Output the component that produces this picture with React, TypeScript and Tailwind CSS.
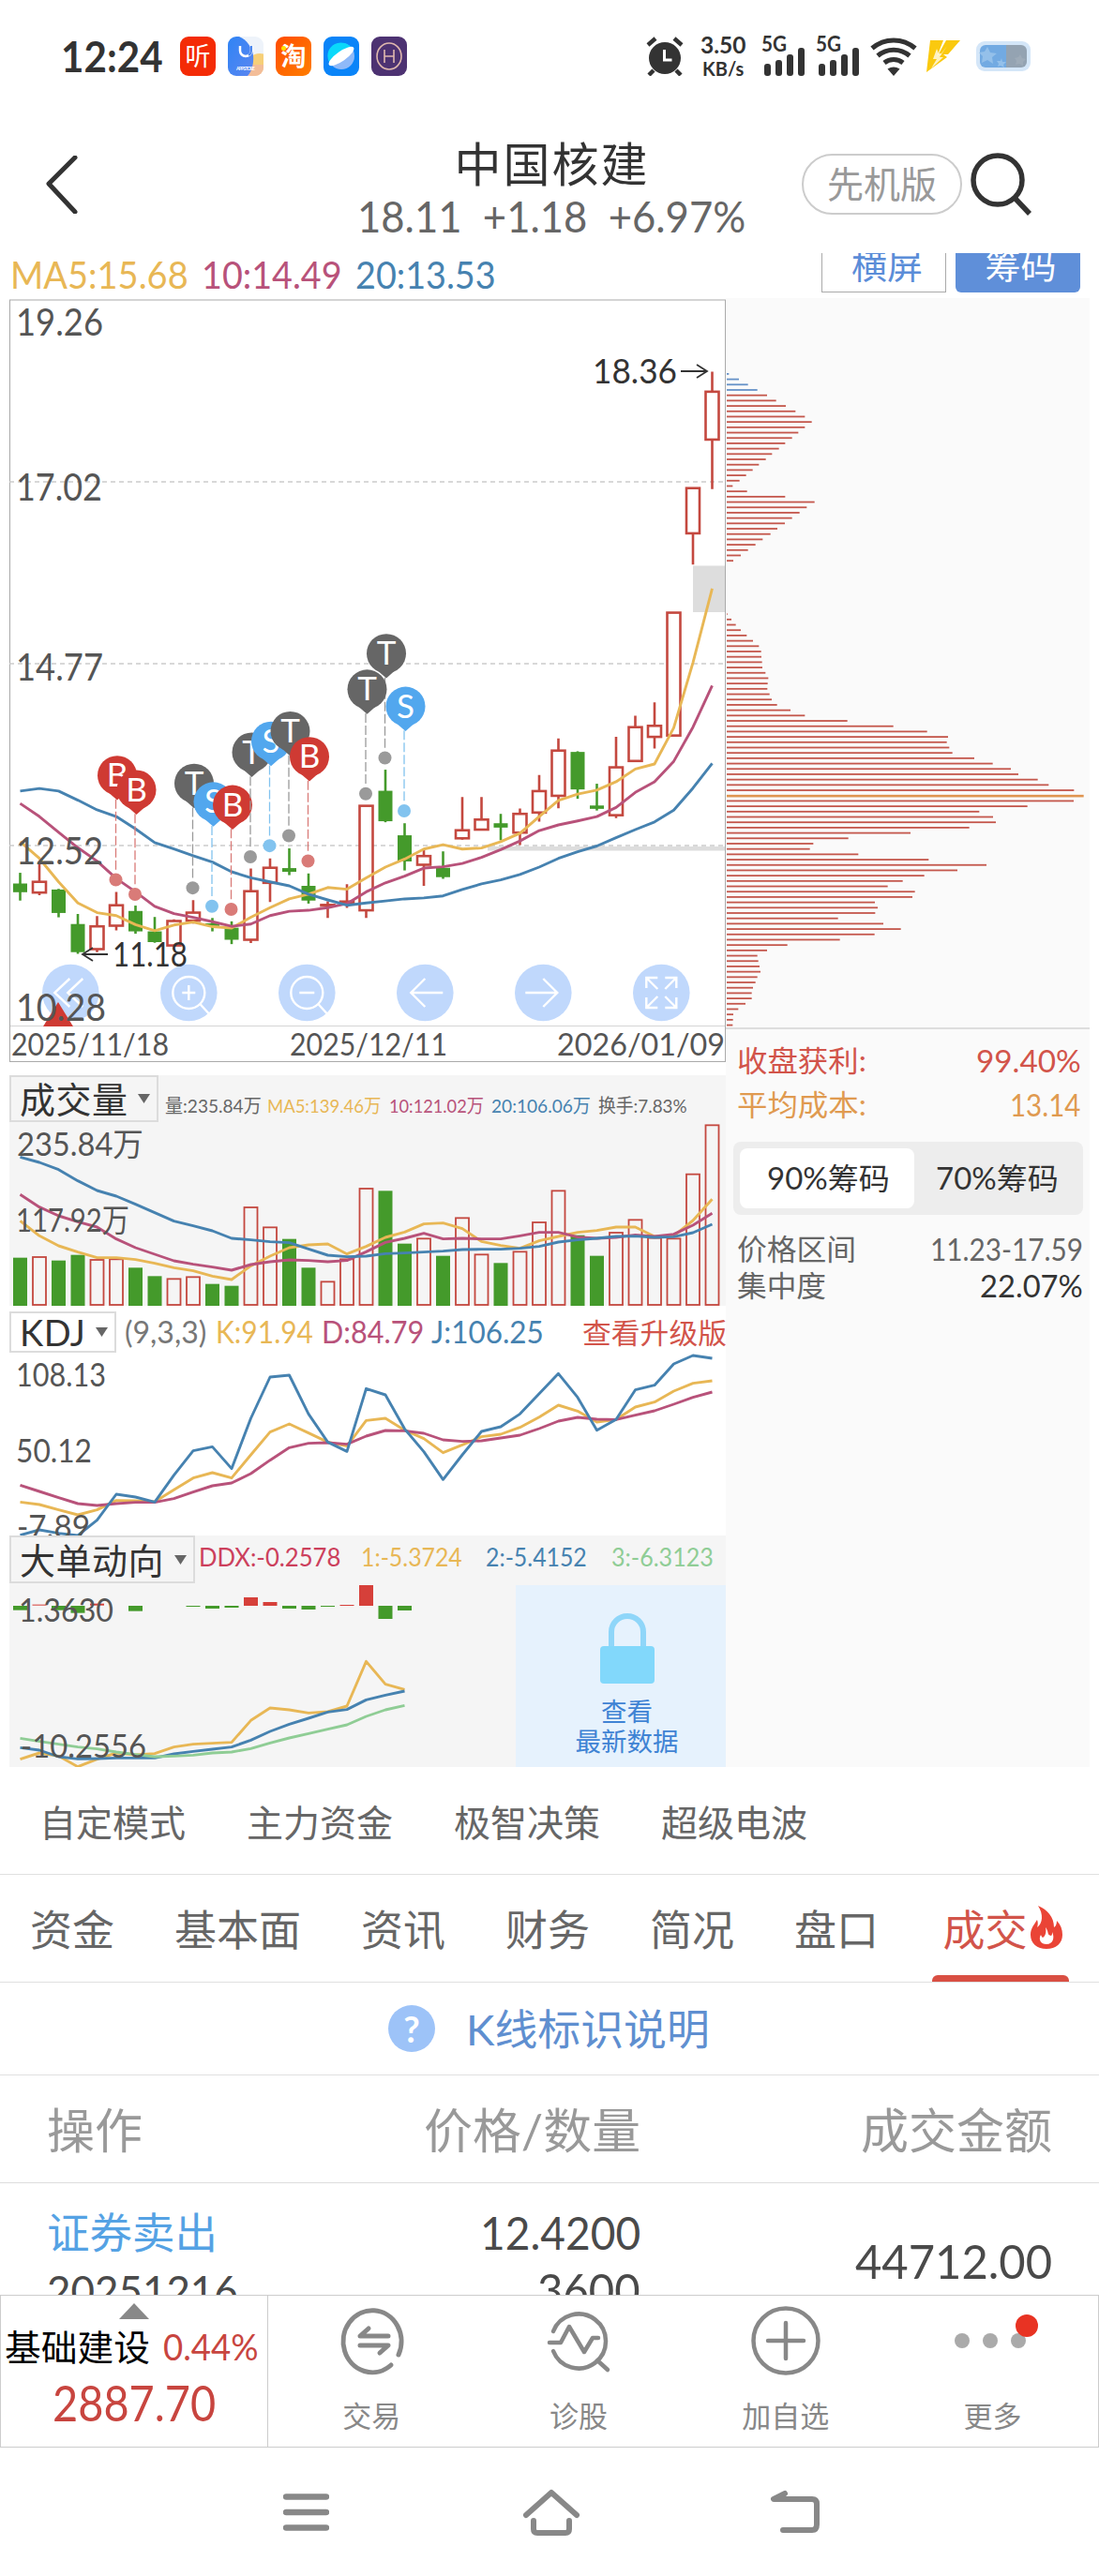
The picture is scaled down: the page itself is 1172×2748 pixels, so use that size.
import React, { useLayoutEffect, useRef, useState } from 'react';

const YELLOW = '#e8b755';
const PINK = '#b8527a';
const BLUE = '#4682b0';
const RED = '#c4483f';
const GREEN = '#449a2b';
const FONT = 'Lato, "Noto Sans CJK SC", sans-serif';

// [high, body top, body bottom, low, rising]
const candles: [number, number, number, number, number][] = [
  [983, 1015, 1041, 1066, 0], [955, 1010, 1042, 1050, 1], [1031, 1033, 1103, 1116, 0], [1106, 1136, 1220, 1225, 0],
  [1112, 1143, 1211, 1220, 1], [1040, 1080, 1141, 1155, 1], [1081, 1097, 1158, 1165, 0], [1115, 1158, 1190, 1192, 0],
  [1122, 1127, 1200, 1200, 1], [1065, 1102, 1126, 1135, 1], [1118, 1134, 1142, 1158, 0], [1128, 1147, 1183, 1196, 0],
  [970, 1038, 1183, 1193, 1], [940, 968, 1013, 1070, 1], [910, 969, 980, 990, 0], [985, 1022, 1066, 1075, 0],
  [1068, 1079, 1081, 1118, 1], [1017, 1069, 1072, 1088, 1], [782, 783, 1095, 1118, 1], [675, 738, 829, 832, 0],
  [835, 871, 949, 976, 0], [912, 933, 959, 1022, 1], [919, 968, 996, 1001, 0], [757, 856, 880, 884, 1],
  [757, 824, 854, 856, 1], [807, 835, 848, 886, 0], [791, 807, 863, 900, 1], [691, 739, 803, 830, 1],
  [582, 618, 753, 790, 1], [620, 622, 734, 762, 0], [717, 782, 792, 797, 0], [577, 668, 811, 820, 1],
  [514, 548, 649, 650, 1], [474, 544, 577, 612, 1], [205, 206, 573, 574, 1], [-168, -166, -31, 62, 1],
  [-514, -454, -311, -163, 1],
];
const ma5 = [890, 940, 1010, 1073, 1102, 1111, 1138, 1156, 1139, 1130, 1144, 1148, 1116, 1087, 1061, 1047, 1027, 1032, 998, 966, 942, 912, 899, 912, 909, 890, 865, 815, 767, 748, 736, 711, 673, 658, 550, 355, 134];
const ma10 = [776, 815, 862, 908, 948, 1000, 1040, 1083, 1105, 1116, 1129, 1143, 1136, 1111, 1098, 1095, 1087, 1075, 1040, 1013, 993, 969, 965, 955, 937, 914, 888, 857, 840, 828, 815, 788, 743, 711, 650, 548, 424];
const ma20 = [739, 731, 739, 766, 795, 815, 852, 893, 912, 932, 951, 980, 998, 1010, 1022, 1047, 1064, 1080, 1073, 1067, 1061, 1058, 1052, 1033, 1016, 1004, 988, 966, 940, 920, 903, 878, 854, 831, 796, 730, 656];

const marks: [number, string, string, string, number][] = [
  [5, 'B', '#cf3a33', '#d97b78', 692], [6, 'B', '#cf3a33', '#d97b78', 735],
  [9, 'T', '#666666', '#9a9a9a', 716], [10, 'S', '#52a7ee', '#82c3ef', 771], [11, 'B', '#cf3a33', '#d97b78', 780],
  [12, 'T', '#666666', '#9a9a9a', 623], [13, 'S', '#52a7ee', '#82c3ef', 590], [14, 'T', '#666666', '#9a9a9a', 560],
  [15, 'B', '#cf3a33', '#d97b78', 636], [19, 'T', '#666666', '#9a9a9a', 328], [18, 'T', '#666666', '#9a9a9a', 435],
  [20, 'S', '#52a7ee', '#82c3ef', 486],
];

const volume: [number, number][] = [
  [605, 0], [603, 1], [614, 0], [596, 0], [612, 1], [610, 1], [637, 0], [664, 0], [673, 1], [667, 1], [689, 0], [695, 0],
  [444, 1], [508, 1], [545, 0], [637, 0], [682, 1], [610, 1], [384, 1], [391, 0], [560, 0], [544, 1], [599, 0], [478, 1],
  [595, 1], [622, 0], [586, 1], [492, 1], [391, 1], [533, 0], [599, 0], [525, 1], [484, 1], [542, 1], [544, 1], [338, 1], [181, 1],
];
const vol5 = [487, 535, 567, 587, 605, 605, 611, 623, 637, 647, 664, 675, 631, 600, 573, 564, 561, 593, 569, 540, 523, 497, 494, 512, 553, 566, 575, 551, 537, 524, 518, 507, 507, 537, 535, 486, 418];
const vol10 = [403, 443, 471, 490, 507, 545, 573, 594, 615, 626, 635, 645, 627, 618, 612, 614, 618, 614, 586, 556, 543, 527, 545, 543, 545, 545, 535, 524, 524, 539, 543, 540, 532, 537, 530, 501, 463];
const vol20 = [283, 300, 323, 359, 390, 408, 434, 461, 488, 503, 519, 543, 548, 554, 557, 577, 597, 602, 600, 592, 590, 587, 584, 579, 578, 578, 575, 569, 555, 548, 543, 537, 536, 540, 538, 525, 498];

const kLine = [1387, 1395, 1412, 1428, 1412, 1382, 1383, 1386, 1348, 1310, 1293, 1310, 1236, 1163, 1137, 1166, 1195, 1208, 1126, 1119, 1157, 1184, 1229, 1204, 1178, 1170, 1148, 1115, 1077, 1096, 1131, 1123, 1083, 1067, 1032, 1007, 999];
const dLine = [1333, 1353, 1373, 1392, 1398, 1392, 1388, 1388, 1376, 1355, 1335, 1326, 1296, 1253, 1213, 1199, 1197, 1202, 1176, 1158, 1159, 1167, 1188, 1193, 1191, 1182, 1173, 1152, 1128, 1116, 1122, 1123, 1109, 1095, 1074, 1052, 1035];
const jLine = [1493, 1476, 1487, 1494, 1445, 1362, 1371, 1387, 1301, 1223, 1210, 1280, 1119, 987, 981, 1105, 1195, 1225, 1024, 1044, 1153, 1226, 1315, 1236, 1161, 1146, 1105, 1040, 976, 1052, 1157, 1123, 1028, 1013, 945, 918, 927];

// [index, top, bottom, rising]
const ddx: [number, number, number, number][] = [
  [0, 279, 293, 0], [1, 275, 278, 1], [2, 279, 293, 0], [3, 279, 302, 0], [4, 272, 278, 1], [6, 279, 296, 0], [9, 279, 282, 0],
  [10, 279, 288, 0], [11, 279, 285, 0], [12, 252, 279, 1], [13, 267, 279, 1], [14, 279, 288, 0], [15, 279, 291, 0],
  [16, 279, 282, 0], [17, 276, 279, 1], [18, 213, 279, 1], [19, 279, 321, 0], [20, 279, 294, 0],
];
const ddx1 = [770, 750, 760, 794, 770, 750, 756, 752, 731, 722, 719, 716, 646, 606, 612, 622, 618, 600, 457, 530, 547];
const ddx2 = [733, 741, 762, 769, 768, 766, 766, 766, 753, 745, 738, 731, 709, 681, 658, 639, 619, 611, 580, 565, 552];
const ddx3 = [703, 713, 722, 731, 737, 747, 755, 762, 760, 757, 750, 747, 736, 718, 702, 688, 674, 660, 633, 612, 598];

const chipsTop = [52, 84, 113, 143, 174, 203, 234, 265, 295, 317, 295, 274, 254, 232, 212, 190, 170, 148, 128, 107, 86, 64, 110, 232, 326, 301, 278, 254, 231, 207, 185, 160, 137, 113, 90, 66];
const chipsBottom = [47, 60, 74, 90, 109, 129, 148, 155, 156, 158, 159, 169, 178, 176, 175, 182, 189, 206, 249, 295, 431, 578, 686, 753, 749, 757, 767, 837, 896, 954, 978, 1040, 1075, 1156, 1187, 1155, 1007, 853, 897, 906, 821, 633, 434, 322, 311, 466, 691, 876, 783, 677, 608, 560, 647, 639, 519, 528, 520, 401, 546, 602, 518, 407, 239, 174, 143, 146, 150, 153, 143, 137, 129, 125, 125, 105, 82, 66, 65, 64];

const px = (i: number) => 21.5 + 20.5 * i;
const priceY = (v: number) => 580 + v / 2.8;
const indicatorY = (v: number) => 1140 + v / 3;
const ddxY = (v: number) => 1620 + v / 3;

interface LineProps {
  data: number[];
  y: (v: number) => number;
  color: string;
}

const Line: React.FC<LineProps> = ({ data, y, color }) => (
  <polyline points={data.map((v, i) => `${px(i)},${y(v)}`).join(' ')} fill="none" stroke={color} strokeWidth="2.900" strokeLinejoin="round" />
);

interface LabelProps {
  x: number;
  y: number;
  w: number;
  size: number;
  color?: string;
  children: string;
}

const Label: React.FC<LabelProps> = ({ x, y, w, size, color = '#555555', children }) => (
  <text x={x} y={y} textLength={w} lengthAdjust="spacingAndGlyphs" fontSize={size} fontFamily={FONT} fill={color}>{children}</text>
);

// Squeezes one line of text to the width of its box
const Fit: React.FC<{ className: string; children: string }> = ({ className, children }) => {
  const box = useRef<HTMLSpanElement>(null);
  const inner = useRef<HTMLSpanElement>(null);
  const [scale, setScale] = useState(1);

  useLayoutEffect(() => {
    if (box.current && inner.current) {
      setScale(box.current.clientWidth / inner.current.offsetWidth);
    }
  }, [children]);

  return (
    <span ref={box} className={`block shrink-0 whitespace-pre ${className}`}>
      <span ref={inner} className="inline-block origin-left" style={{ transform: `scaleX(${scale})` }}>{children}</span>
    </span>
  );
};

const StatusBar = () => (
  <div className="flex h-[120px] items-center pl-[65px] text-[#333]">
    <Fit className="w-[109px] text-[46px] leading-none font-bold">12:24</Fit>
    <div className="ml-[18px] flex gap-[13px]">
      <div className="flex h-[42px] w-[38px] items-center justify-center rounded-[9px] bg-[#f42b06] text-[27px] text-white">听</div>
      <svg width="38" height="42" viewBox="0 0 38 42">
        <defs>
          <clipPath id="store"><rect width="38" height="42" rx="9" /></clipPath>
          <linearGradient id="sblue" x1="0" y1="0" x2="1" y2="1"><stop offset="0" stopColor="#2f84f5" /><stop offset="1" stopColor="#5b86f0" /></linearGradient>
        </defs>
        <g clipPath="url(#store)">
          <rect width="38" height="42" fill="#eef3fa" />
          <circle cx="34" cy="32" r="14" fill="#f6cf78" />
          <rect x="20" y="30" width="18" height="12" fill="#f2b8a0" opacity=".8" />
          <path d="M0 0h12c8 3 14 12 15 20 1 9-2 18-6 22H0z" fill="url(#sblue)" />
        </g>
        <path d="M13 10v5a6 6 0 0 0 12 0v-5" fill="none" stroke="#fff" strokeWidth="2.5" />
        <path d="M22 20a6 6 0 0 0 3-5v-5" fill="none" stroke="#4b86ee" strokeWidth="2" />
        <text x="9" y="36" fontSize="5" fontWeight="700" fill="#fff" textLength="20" fontFamily={FONT}>APP STORE</text>
      </svg>
      <div className="relative flex h-[42px] w-[38px] items-center justify-center rounded-[9px] bg-gradient-to-br from-[#ff4a00] to-[#ff7d00] text-[27px] font-bold text-white">
        淘
        <span className="absolute top-[10px] left-[6px] h-[5px] w-[5px] rounded-full bg-[#ffe000]"></span>
      </div>
      <svg width="38" height="42" viewBox="0 0 38 42">
        <rect width="38" height="42" rx="9" fill="#0a84f8" />
        <circle cx="19" cy="21" r="14" fill="#8fb9f8" />
        <path d="M6 27A14 14 0 0 1 31 14z" fill="#0ad8fa" />
        <ellipse cx="19" cy="21" rx="16" ry="5.2" transform="rotate(-35 19 21)" fill="#fff" />
      </svg>
      <svg width="38" height="42" viewBox="0 0 38 42">
        <rect width="38" height="42" rx="9" fill="#4d3272" />
        <ellipse cx="19" cy="21" rx="13" ry="14" fill="none" stroke="#dfb8ae" strokeWidth="1.6" />
        <path d="M14 14v14M24 14v14M14 21h10" stroke="#dfb8ae" strokeWidth="1.6" />
      </svg>
    </div>
    <svg className="ml-[255px]" width="40" height="42" viewBox="0 0 40 42">
      <circle cx="20" cy="23" r="17" fill="#333" />
      <path d="M2 9l8-7M38 9l-8-7M8 36l-5 5M32 36l5 5" stroke="#333" strokeWidth="4.5" />
      <path d="M19.500 14v11h8" fill="none" stroke="#fff" strokeWidth="3" />
    </svg>
    <div className="ml-[17px] flex w-[50px] flex-col items-center font-bold">
      <Fit className="w-[48px] text-[24px] leading-[26px]">3.50</Fit>
      <Fit className="w-[44px] text-[20px] leading-[24px]">KB/s</Fit>
    </div>
    {[0, 1].map(n => (
      <svg key={n} className={n ? 'ml-[11px] overflow-visible' : 'ml-[16px] overflow-visible'} width="47" height="46" viewBox="0 0 47 46">
        <text x="0" y="18" fontSize="22" fontWeight="700" fontFamily={FONT} fill="#333" textLength="27" lengthAdjust="spacingAndGlyphs">5G</text>
        <rect x="3" y="31" width="7" height="13" rx="3" fill="#333" />
        <rect x="15" y="27" width="7" height="17" rx="3" fill="#333" />
        <rect x="27" y="21" width="7" height="23" rx="3" fill="#333" />
        <rect x="39" y="14" width="7" height="30" rx="3" fill="#333" />
      </svg>
    ))}
    <svg className="ml-[11px]" width="50" height="42" viewBox="0 0 50 42" fill="none" stroke="#333" strokeWidth="5">
      <path d="M2 12.500a35 35 0 0 1 46 0M8 20.500a26 26 0 0 1 34 0M15 28a16 16 0 0 1 20 0" />
      <path d="M18.500 34.500q6.500-4 13 0L25 42z" fill="#333" stroke="none" />
    </svg>
    <svg className="ml-[9px]" width="37" height="34" viewBox="0 0 37 34">
      <path d="M5 0h14l-7 18 10-18h15L24 15h-5l4 3L1 34z" fill="#fac90f" />
      <path d="M12 9l-4 11h4L6 30l13-12h-4l8-12-6 8h-3z" fill="#fff" opacity=".75" />
    </svg>
    <svg className="ml-[17px]" width="58" height="32" viewBox="0 0 58 32">
      <rect width="58" height="32" rx="9" fill="#d4e6f8" />
      <path d="M10 4h22v24H10a6 6 0 0 1-6-6V10a6 6 0 0 1 6-6z" fill="#72aae2" />
      <path d="M32 4h16a6 6 0 0 1 6 6v12a6 6 0 0 1-6 6H32z" fill="#94a3b2" />
      <path d="M12 6l3 6 7 1-5 4 1 7-6-4-6 3 1-7-4-4 6-1zM27 18l1 4 4 0-3 3 1 3-4-2-3 1 1-3-2-3 4 0z" fill="#94c0ea" />
      <path d="M47 14l2 4 4 1-3 3 0 4-4-2-4 1 1-4-2-3 4-1z" fill="#9eabb8" />
    </svg>
  </div>
);

const Header = () => (
  <div className="flex h-[150px]">
    <svg className="mt-[46px] ml-[48px]" width="36" height="62" viewBox="0 0 36 62">
      <path d="M32 2L4 30l28 30" fill="none" stroke="#333" strokeWidth="5" strokeLinecap="round" strokeLinejoin="round" />
    </svg>
    <div className="ml-[297px] flex w-[414px] flex-col items-center pt-[27px]">
      <div className="pl-[1px] text-[50px] leading-[56px] tracking-[2px] text-[#333]">中国核建</div>
      <Fit className="w-[414px] text-[47px] leading-[55px] text-[#666]">{'18.11  +1.18  +6.97%'}</Fit>
    </div>
    <div className="mt-[44px] ml-[60px] flex h-[65px] w-[171px] items-center justify-center rounded-full border-2 border-[#ccc] text-[39px] text-[#999]">先机版</div>
    <svg className="mt-[43px] ml-[9px]" width="66" height="68" viewBox="0 0 66 68" fill="none" stroke="#333" strokeWidth="5.500">
      <circle cx="29" cy="29" r="26" />
      <path d="M47 48l16 17" />
    </svg>
  </div>
);

const toolIcons = [
  <path d="M-1-15l-16 15 16 15M13-15l-16 15 16 15" />,
  <g><circle r="17" /><path d="M0-8V8M-7 0h14M12 12l10 11" /></g>,
  <g><circle r="17" /><path d="M-8 0H8M12 12l10 11" /></g>,
  <path d="M19 0h-34M0-15L-15 0 0 15" />,
  <path d="M-19 0h34M0-15L15 0 0 15" />,
  <path d="M-4-4l-12-12M-16-5v-11h12M4-4l12-12M16-5v-11H4M-4 4l-12 12M-16 5v11h12M4 4l12 12M16 5v11H4" />,
];

const PriceChart = () => (
  <svg className="block" width="764" height="776" viewBox="10 319 764 776">
    <rect x="10.500" y="320" width="763" height="775" fill="#fff" stroke="#aaa" />
    {[514, 708, 902].map(y => <path key={y} d={`M10 ${y}H773`} stroke="#ccc" strokeWidth="1.400" strokeDasharray="5 4" />)}
    <rect x="739" y="603.500" width="34" height="49.500" fill="#ddd" />
    <rect x="520" y="903" width="253" height="4.500" fill="#ddd" />

    {toolIcons.map((icon, i) => (
      <g key={i} transform={`translate(${75.3 + 126 * i} 1059)`} fill="none" stroke="#fff" strokeWidth="2.400">
        <circle r="30.300" fill="#c0d8fc" stroke="none" />
        {icon}
      </g>
    ))}

    {candles.map(([high, top, bottom, low, up], i) => (
      <g key={i}>
        {up ? (
          <g stroke={RED} strokeWidth="2.600" fill="#fff">
            <path d={`M${px(i)} ${priceY(high)}V${priceY(top)}M${px(i)} ${priceY(bottom)}V${priceY(low)}`} />
            <rect x={px(i) - 7} y={priceY(top)} width="14" height={priceY(bottom) - priceY(top)} />
          </g>
        ) : (
          <g>
            <path d={`M${px(i)} ${priceY(high)}V${priceY(low)}`} stroke={GREEN} strokeWidth="2.600" />
            <rect x={px(i) - 7.5} y={priceY(top)} width="15" height={priceY(bottom) - priceY(top)} fill={GREEN} />
          </g>
        )}
      </g>
    ))}
    <Line data={ma5} y={priceY} color={YELLOW} />
    <Line data={ma10} y={priceY} color={PINK} />
    <Line data={ma20} y={priceY} color={BLUE} />

    {marks.map(([i, letter, fill, dot, c]) => (
      <g key={i}>
        <path d={`M${px(i) - 0.5} ${priceY(c + 72)}V${priceY(c + 288)}`} stroke={dot} strokeWidth="1.300" strokeDasharray="10 3" />
        <circle cx={px(i) - 0.5} cy={priceY(c + 312)} r="7" fill={dot} />
        <path d={`M${px(i) - 8} ${priceY(c + 52)}L${px(i) + 1} ${priceY(c + 74)}l9 -8z`} fill={fill} />
        <circle cx={px(i) + 1} cy={priceY(c)} r="21" fill={fill} />
        <text x={px(i) + 1} y={priceY(c) + 12} textAnchor="middle" fontSize="35" fontFamily={FONT} fill="#fff">{letter}</text>
      </g>
    ))}

    <path d="M62 1069l16 26H46z" fill="#cf3a33" />
    <Label x={17} y={358} w={93} size={40}>19.26</Label>
    <Label x={17} y={534} w={92} size={40}>17.02</Label>
    <Label x={17} y={726} w={93} size={40}>14.77</Label>
    <Label x={17} y={922} w={93} size={40}>12.52</Label>
    <Label x={17} y={1089} w={96} size={40}>10.28</Label>
    <Label x={632} y={409} w={90} size={37} color="#333333">18.36</Label>
    <Label x={120} y={1031} w={80} size={37} color="#333333">11.18</Label>
    <path d="M726 396h28M743 389l11 7-11 7M115 1018H89M99 1011l-11 7 11 7" fill="none" stroke="#333" strokeWidth="1.800" />
  </svg>
);

const Selector: React.FC<{ className: string; children: string }> = ({ className, children }) => (
  <div className={`flex shrink-0 items-center justify-between border-2 border-[#dcdcdc] pr-[7px] pl-[9px] text-[38px] tracking-[0.5px] text-[#333] ${className}`}>
    <span className="whitespace-nowrap">{children}</span>
    <svg width="13" height="10" viewBox="0 0 13 10"><path d="M0 0h13L6.500 10z" fill="#666" /></svg>
  </div>
);

const VolumePanel = () => (
  <div className="mt-[14px] h-[246px] bg-[#f5f5f5]">
    <div className="flex h-[50px]">
      <Selector className="h-[50px] w-[159px]">成交量</Selector>
      <div className="flex pt-[20px] pl-[7px] text-[20px] leading-[24px]">
        <Fit className="w-[103px] text-[#666]">量:235.84万</Fit>
        <Fit className="ml-[6px] w-[121px] text-[#e8b755]">MA5:139.46万</Fit>
        <Fit className="ml-[9px] w-[101px] text-[#b8527a]">10:121.02万</Fit>
        <Fit className="ml-[8px] w-[106px] text-[#4682b0]">20:106.06万</Fit>
        <Fit className="ml-[8px] w-[95px] text-[#666]">换手:7.83%</Fit>
      </div>
    </div>
    <svg className="block" width="764" height="196" viewBox="10 1197 764 196">
      {volume.map(([top, up], i) => up
        ? <rect key={i} x={px(i) - 7} y={indicatorY(top)} width="14" height={1392 - indicatorY(top)} fill="none" stroke={RED} strokeWidth="1.800" />
        : <rect key={i} x={px(i) - 7.5} y={indicatorY(top)} width="15" height={1393 - indicatorY(top)} fill={GREEN} />)}
      <Line data={vol5} y={indicatorY} color={YELLOW} />
      <Line data={vol10} y={indicatorY} color={PINK} />
      <Line data={vol20} y={indicatorY} color={BLUE} />
      <Label x={18} y={1233} w={135} size={34}>235.84万</Label>
      <Label x={17} y={1314} w={121} size={34}>117.92万</Label>
    </svg>
  </div>
);

const KdjPanel = () => (
  <div className="h-[245px] bg-white pt-[6px]">
    <div className="flex h-[44px] items-center text-[32px] leading-none">
      <Selector className="h-[44px] w-[114px]">KDJ</Selector>
      <Fit className="ml-[9px] w-[87px] text-[#777]">(9,3,3)</Fit>
      <Fit className="ml-[10px] w-[104px] text-[#e8b755]">K:91.94</Fit>
      <Fit className="ml-[9px] w-[109px] text-[#b8527a]">D:84.79</Fit>
      <Fit className="ml-[8px] w-[120px] text-[#4682b0]">J:106.25</Fit>
      <Fit className="ml-[41px] w-[154px] text-[30px] text-[#d2544a]">查看升级版</Fit>
    </div>
    <svg className="block" width="764" height="195" viewBox="10 1443 764 195">
      <Line data={kLine} y={indicatorY} color={YELLOW} />
      <Line data={dLine} y={indicatorY} color={PINK} />
      <Line data={jLine} y={indicatorY} color={BLUE} />
      <Label x={17} y={1479} w={96} size={34}>108.13</Label>
      <Label x={17} y={1560} w={81} size={34}>50.12</Label>
      <Label x={18} y={1641} w={78} size={34}>-7.89</Label>
    </svg>
  </div>
);

const DdxPanel = () => (
  <div className="bg-[#f5f5f5]">
    <div className="flex h-[53px] text-[26px] leading-[26px]">
      <Selector className="h-[51px] w-[198px]">大单动向</Selector>
      <div className="flex pt-[10px] pl-[4px]">
        <Fit className="w-[151px] text-[#cc405c]">DDX:-0.2578</Fit>
        <Fit className="ml-[22px] w-[108px] text-[#e8b755]">1:-5.3724</Fit>
        <Fit className="ml-[25px] w-[108px] text-[#4682b0]">2:-5.4152</Fit>
        <Fit className="ml-[26px] w-[109px] text-[#8fcd95]">3:-6.3123</Fit>
      </div>
    </div>
    <div className="flex h-[194px]">
      <svg className="block" width="540" height="194" viewBox="10 1691 540 194">
        {ddx.map(([i, top, bottom, up]) => (
          <rect key={i} x={px(i) - 7.5} y={ddxY(top)} width="15" height={(bottom - top) / 3} fill={up ? '#d6403a' : GREEN} />
        ))}
        <Line data={ddx1} y={ddxY} color={YELLOW} />
        <Line data={ddx2} y={ddxY} color={BLUE} />
        <Line data={ddx3} y={ddxY} color="#8fcd95" />
        <Label x={20} y={1730} w={101} size={34}>1.3630</Label>
        <Label x={22} y={1875} w={134} size={34}>-10.2556</Label>
      </svg>
      <div className="flex w-[224px] flex-col items-center bg-[#e6f2fd] pt-[30px] pl-[13px] text-[27.500px] leading-[32px] text-[#3f83d4]">
        <svg width="58" height="76" viewBox="0 0 58 76">
          <path d="M12 38V20a17 17 0 0 1 34 0v18" fill="none" stroke="#8fd6f9" strokeWidth="6" />
          <rect y="35" width="58" height="40" rx="4" fill="#82d8fb" />
        </svg>
        <div className="mt-[13px]">查看</div>
        <div>最新数据</div>
      </div>
    </div>
  </div>
);

const ChipChart = () => (
  <svg className="block" width="388" height="778" viewBox="774 318 388 778">
    {chipsTop.map((end, i) => (
      <rect key={i} x="775" y={398 + i * 5.694} width={(end - 45) / 3} height="1.800" fill={i < 4 ? '#6692c8' : '#c4574c'} />
    ))}
    {chipsBottom.map((end, i) => (
      <rect key={i} x="775" y={398 + (i + 45) * 5.694} width={(end - 45) / 3} height={i === 34 ? 2.6 : 1.8} fill={i === 34 ? '#df9550' : '#c4574c'} />
    ))}
  </svg>
);

const ChipPanel = () => (
  <div className="-mt-[1px] h-[1567px] w-[388px] bg-[#fafafa]">
    <ChipChart />
    <div className="border-t-2 border-[#ddd] pt-[10px] pr-[7px] pl-[12px] text-[33px] leading-[46px]">
      <div className="flex items-center justify-between text-[#d2544a]">
        <Fit className="w-[138px] text-[31px]">收盘获利:</Fit>
        <Fit className="mr-[2px] w-[112px]">99.40%</Fit>
      </div>
      <div className="mt-[1px] flex items-center justify-between text-[#e09a50]">
        <Fit className="w-[138px] text-[31px]">平均成本:</Fit>
        <Fit className="mr-[3px] w-[75px]">13.14</Fit>
      </div>
      <div className="mt-[17px] -ml-[4px] flex h-[78px] w-[373px] items-center rounded-[8px] bg-[#ededed] px-[7px] text-[#333]">
        <div className="flex h-[64px] w-[186px] items-center justify-center rounded-[8px] bg-white pl-[2px]">
          <Fit className="w-[131px] text-[32px]">90%筹码</Fit>
        </div>
        <div className="flex h-[64px] w-[173px] items-center justify-center pl-[3px]">
          <Fit className="w-[131px] text-[32px]">70%筹码</Fit>
        </div>
      </div>
      <div className="mt-[16px] flex items-center justify-between leading-[40px] text-[#666]">
        <Fit className="w-[127px] text-[31px]">价格区间</Fit>
        <Fit className="w-[163px]">11.23-17.59</Fit>
      </div>
      <div className="flex items-center justify-between leading-[38px] text-[#333]">
        <Fit className="w-[95px] text-[31px] text-[#666]">集中度</Fit>
        <Fit className="w-[110px]">22.07%</Fit>
      </div>
    </div>
  </div>
);

const Flame = () => (
  <svg className="mb-[8px] ml-[3px]" width="34" height="46" viewBox="0 0 34 46">
    <path d="M8 0c10 4 17 12 17 23 2-1 3-4 3-7 4 4 6 9 6 15 0 9-7 15-17 15S0 40 0 31c0-7 4-11 7-16 1 3 1 5 0 8C13 19 14 9 8 0z" fill="#ea4436" />
    <path d="M16 23c4 5 1 8 6 9 1-1 1-2 1-4 3 6 1 13-6 13-6 0-9-5-6-10 1 2 1 2 2 3 3-2 4-6 3-11z" fill="#fff" />
  </svg>
);

const BottomItem: React.FC<{ label: string; children: React.ReactNode }> = ({ label, children }) => (
  <div className="flex w-[220.700px] flex-col items-center">
    <div className="flex h-[96px] items-center justify-center">{children}</div>
    <div className="mt-[12px] text-[31px] leading-[40px] text-[#888]">{label}</div>
  </div>
);

const BottomBar = () => (
  <div className="flex h-[163px] border border-[#ccc] bg-white">
    <div className="flex w-[285px] shrink-0 flex-col items-center border-r border-[#ccc]">
      <svg className="mt-[8px]" width="32" height="17" viewBox="0 0 32 17"><path d="M16 0l16 17H0z" fill="#888" /></svg>
      <div className="mt-[6px] mr-[5px] flex w-[271px] items-center justify-between leading-[46px]">
        <Fit className="w-[155px] text-[38px] text-black">基础建设</Fit>
        <Fit className="w-[102px] text-[38px] text-[#c8453f]">0.44%</Fit>
      </div>
      <Fit className="mt-[5px] w-[174px] text-[52px] leading-[64px] text-[#c8453f]">2887.70</Fit>
    </div>
    <BottomItem label="交易">
      <svg className="overflow-visible" width="70" height="76" viewBox="-38 -38 70 76" fill="none" stroke="#888" strokeWidth="5" strokeLinecap="round" strokeLinejoin="round">
        <path d="M18 26A31 33 0 1 1 26 15" />
        <path d="M15-5h-30l9-8M-15 5h30l-9 8" />
      </svg>
    </BottomItem>
    <BottomItem label="诊股">
      <svg width="70" height="76" viewBox="-35 -38 70 76" fill="none" stroke="#888" strokeWidth="4.500" strokeLinecap="round" strokeLinejoin="round">
        <path d="M-27-10A29 29 0 1 1-27 11M20 21l11 10M-31 2h12l9-17L6 12l9-15h6" />
      </svg>
    </BottomItem>
    <BottomItem label="加自选">
      <svg width="76" height="76" viewBox="-38 -38 76 76" fill="none" stroke="#888" strokeWidth="4.500" strokeLinecap="round">
        <circle r="34.500" />
        <path d="M0-19v38M-19 0h38" />
      </svg>
    </BottomItem>
    <BottomItem label="更多">
      <svg className="overflow-visible" width="92" height="76" viewBox="-46 -38 92 76" fill="#aaa">
        <circle cx="-32" r="8" /><circle cx="-2" r="8" /><circle cx="28" r="8" />
        <circle cx="37" cy="-16" r="12" fill="#e83323" />
      </svg>
    </BottomItem>
  </div>
);

const NavBar = () => (
  <div className="flex h-[137px] items-center justify-between pr-[297px] pl-[302px]">
    <svg width="49" height="40" viewBox="0 0 49 40" stroke="#888" strokeWidth="6.500" strokeLinecap="round"><path d="M3 3.500h43M3 20h43M3 36.500h43" /></svg>
    <svg className="ml-[3px]" width="64" height="50" viewBox="-32 -25 64 50" fill="none" stroke="#888" strokeWidth="6" strokeLinecap="round" strokeLinejoin="round">
      <path d="M-27 3L0-21 27 3M-19 9v9q0 4 4 4h30q4 0 4-4v-9" />
    </svg>
    <svg width="54" height="48" viewBox="0 0 54 48" fill="none" stroke="#888" strokeWidth="6" strokeLinecap="round" strokeLinejoin="round">
      <path d="M16 4L4 10h41q5 0 5 5v22q0 6-5 6H14" />
    </svg>
  </div>
);

const modes = ['自定模式', '主力资金', '极智决策', '超级电波'];
const tabs = ['资金', '基本面', '资讯', '财务', '简况', '盘口'];

const App: React.FC = () => {
  return (
    <div className="flex h-[2748px] w-[1172px] flex-col overflow-hidden bg-white font-[Lato,'Noto_Sans_CJK_SC',sans-serif] text-[#666]">
      <StatusBar />
      <Header />

      <div className="flex h-[49px] justify-between pr-[20px] pl-[11px]">
        <div className="flex items-center gap-[14px] pb-[4px] text-[41px] leading-none">
          <Fit className="w-[190px] text-[#e8b755]">MA5:15.68</Fit>
          <Fit className="w-[150px] text-[#b8527a]">10:14.49</Fit>
          <Fit className="w-[150px] text-[#4682b0]">20:13.53</Fit>
        </div>
        <div className="flex h-[42px] items-end gap-[10px] overflow-hidden text-[38px]">
          <div className="flex h-[60px] w-[133px] items-center justify-center border border-[#aaa] pl-[7px] text-[#5b8dd8]">横屏</div>
          <div className="flex h-[60px] w-[133px] items-center justify-center rounded-[6px] bg-[#5f8fd9] pl-[6px] text-white">筹码</div>
        </div>
      </div>

      <div className="flex h-[1566px] pl-[10px]">
        <div className="w-[764px]">
          <PriceChart />
          <div className="flex h-[38px] items-center justify-between border border-t-0 border-[#aaa] pl-[1px] text-[33px] leading-none text-[#555]">
            <Fit className="w-[168px]">2025/11/18</Fit>
            <Fit className="ml-[12px] w-[168px]">2025/12/11</Fit>
            <Fit className="w-[179px]">2026/01/09</Fit>
          </div>
          <VolumePanel />
          <KdjPanel />
          <DdxPanel />
        </div>
        <ChipPanel />
      </div>

      <div className="flex h-[115px] items-center gap-[65px] border-b border-[#e0e0e0] pt-[4px] pl-[42px] text-[39px]">
        {modes.map(m => <span key={m}>{m}</span>)}
      </div>

      <div className="flex h-[115px] items-stretch border-b border-[#e0e0e0] pl-[32px] text-[45px]">
        <div className="flex items-center gap-[64px] pt-[6px]">
          {tabs.map(t => <span key={t}>{t}</span>)}
        </div>
        <div className="ml-[57px] flex w-[146px] flex-col items-center">
          <div className="flex h-[108px] items-center pt-[12px] pl-[4px] whitespace-nowrap text-[#d2544a]">成交<Flame /></div>
          <div className="h-[7px] w-full rounded-t-[6px] bg-[#d94f43]"></div>
        </div>
      </div>

      <div className="flex h-[99px] items-center border-b border-[#e0e0e0] pl-[414px] text-[#5f8fd0]">
        <div className="flex h-[50px] w-[50px] items-center justify-center rounded-full bg-[#9dc3f8] text-[38px] font-bold text-white">?</div>
        <Fit className="mt-[3px] ml-[33px] w-[260px] text-[45px] leading-none">K线标识说明</Fit>
      </div>

      <div className="flex h-[115px] shrink-0 items-center border-b border-[#ddd] px-[50px] pt-[4px] text-[51px] text-[#999]">
        <div className="w-[300px]">操作</div>
        <Fit className="ml-[102px] w-[231px]">价格/数量</Fit>
        <div className="flex-1 text-right">成交金额</div>
      </div>

      <div className="flex h-[119px] shrink-0 overflow-hidden px-[50px] text-[49px] leading-[62px] text-[#4a4a4a]">
        <div className="w-[300px] pt-[22px]">
          <div className="text-[45.500px] text-[#55a2e4]">证券卖出</div>
          <Fit className="-mt-[1px] w-[204px] text-[45px]">20251216</Fit>
        </div>
        <div className="flex w-[333px] flex-col items-end pt-[21px]">
          <Fit className="w-[171px]">12.4200</Fit>
          <Fit className="-mt-[1px] w-[110px]">3600</Fit>
        </div>
        <div className="flex flex-1 flex-col items-end pt-[52px]">
          <Fit className="w-[210px] text-[51px]">44712.00</Fit>
        </div>
      </div>

      <BottomBar />
      <NavBar />
    </div>
  );
};

export default App;
